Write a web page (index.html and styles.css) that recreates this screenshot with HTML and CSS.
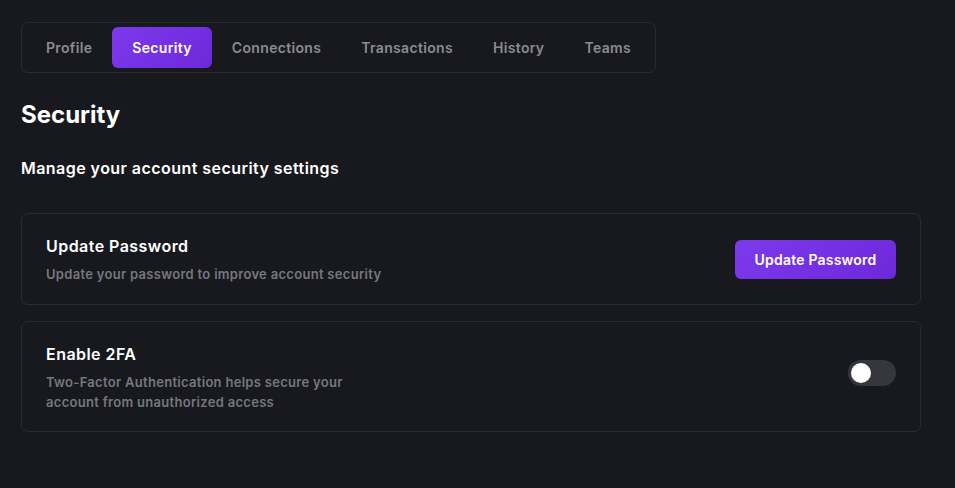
FILE: index.html
```html
<!DOCTYPE html>
<html>
<head>
<meta charset="utf-8">
<link rel="stylesheet" href="styles.css">
</head>
<body>
<div class="page">
  <nav class="tabs">
    <a class="tab">Profile</a>
    <a class="tab active">Security</a>
    <a class="tab">Connections</a>
    <a class="tab">Transactions</a>
    <a class="tab">History</a>
    <a class="tab">Teams</a>
  </nav>
  <h1 class="title">Security</h1>
  <p class="lead">Manage your account security settings</p>
  <section class="card">
    <div class="card-text">
      <h2 class="card-title">Update Password</h2>
      <p class="card-desc">Update your password to improve account security</p>
    </div>
    <button class="btn">Update Password</button>
  </section>
  <section class="card card-2fa">
    <div class="card-text">
      <h2 class="card-title">Enable 2FA</h2>
      <p class="card-desc narrow">Two-Factor Authentication helps secure your account from unauthorized access</p>
    </div>
    <span class="toggle"><span class="knob"></span></span>
  </section>
</div>
</body>
</html>
```
FILE: styles.css
```css
html, body {
  margin: 0;
  padding: 0;
  background: #18191e;
}
body {
  font-family: Inter, "Noto Sans", sans-serif;
  color: #ffffff;
}
.page {
  padding: 22px 34px 0 21px;
  width: 900px;
}
.tabs {
  display: inline-flex;
  padding: 4px;
  border: 1px solid #2a2b31;
  border-radius: 7px;
}
.tab {
  display: block;
  padding: 0 20px;
  height: 41px;
  line-height: 41px;
  font-size: 14px;
  font-weight: 600;
  letter-spacing: 0.33px;
  color: #8b8b90;
  border-radius: 6px;
}
.tab.active {
  background: linear-gradient(135deg, #7c3aed, #6d28d9);
  color: #ffffff;
}
.title {
  margin: 24px 0 0;
  font-size: 24px;
  line-height: 36px;
  font-weight: 700;
}
.lead {
  margin: 23px 0 0;
  font-size: 16px;
  line-height: 24px;
  font-weight: 600;
  letter-spacing: 0.45px;
}
.card {
  display: flex;
  align-items: center;
  justify-content: space-between;
  margin-top: 33px;
  padding: 21px 24px 20px 24px;
  border: 1px solid #2a2b31;
  border-radius: 7px;
}
.card-2fa {
  margin-top: 16px;
  padding-bottom: 19px;
}
.card-title {
  margin: 0;
  font-size: 16px;
  line-height: 22px;
  font-weight: 600;
  letter-spacing: 0.45px;
}
.card-desc {
  margin: 7px 0 0;
  font-size: 13px;
  line-height: 20px;
  font-weight: 600;
  letter-spacing: 0.3px;
  color: #77777c;
}
.card-desc.narrow {
  max-width: 310px;
}
.btn {
  font-family: inherit;
  font-size: 14px;
  font-weight: 600;
  letter-spacing: 0.2px;
  color: #ffffff;
  background: linear-gradient(135deg, #7c3aed, #6d28d9);
  border: 0;
  border-radius: 6px;
  width: 161px;
  height: 39px;
  padding: 0;
}
.toggle {
  display: flex;
  align-items: center;
  width: 48px;
  height: 26px;
  margin-bottom: 9px;
  border-radius: 13px;
  background: #36373c;
  padding: 0 3px;
  box-sizing: border-box;
}
.knob {
  width: 20px;
  height: 20px;
  border-radius: 50%;
  background: #ffffff;
}
```
